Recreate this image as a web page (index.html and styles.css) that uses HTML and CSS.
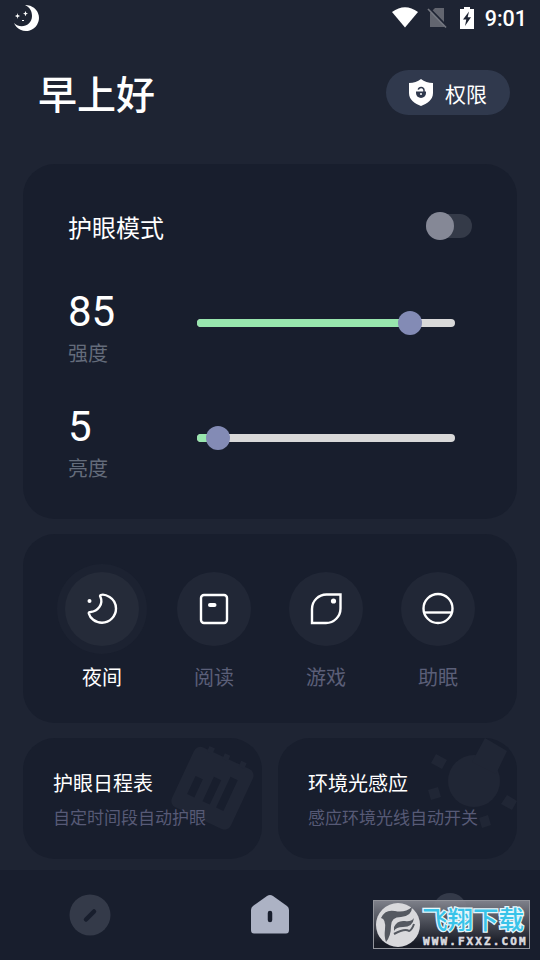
FILE: index.html
```html
<!DOCTYPE html>
<html lang="zh-CN">
<head>
<meta charset="utf-8">
<title>护眼模式</title>
<link rel="stylesheet" href="styles.css">
</head>
<body>
<div class="screen">
  <div class="status">
    <svg class="status-moon" width="28" height="28" viewBox="0 0 28 28" fill="#fff"><path d="M12 1A13 13 0 1 1 1 19C8 26 19 21 19 12C19 6 16 3 12 1Z"/><path d="M4 9l1 2 2 1-2 1v2l-1-2-2-1 2-1zM12.500 7l.8 2 1.700.5-1.700.7-.8 2-.8-2-1.700-.7 1.700-.5zM9 16h2v1H9z"/></svg>
    <div class="status-right">
      <svg width="26" height="21" viewBox="0 0 26 21"><path d="M0 5Q13-4.500 26 5L13 20.500Z" fill="#fff"/></svg>
      <svg width="20" height="22" viewBox="0 0 20 22"><path d="M8 1H17V20H3V6Z" fill="#62656f"/><path d="M2 1L20 19.500" stroke="#1e2433" stroke-width="2"/><path d="M1 2L19 20.500" stroke="#747780" stroke-width="1.700"/></svg>
      <svg width="14" height="22" viewBox="0 0 14 22"><path d="M4 0H10V2H14V22H0V2H4Z" fill="#fff"/><path d="M9 4.500L3 12.500H6.300L5 19L11 10.200H7.700Z" fill="#1e2433"/></svg>
      <span class="clock">9:01</span>
    </div>
  </div>

  <header class="header">
    <h1>早上好</h1>
    <div class="permission">
      <svg width="24" height="27" viewBox="0 0 24 27"><path d="M12 0Q17 4 24 4V14C24 21 18 24.500 12 27C6 24.500 0 21 0 14V4Q7 4 12 0Z" fill="#fff"/><path d="M7 12.500H17V14A5 5 0 0 1 7 14Z" fill="#30394d"/><path d="M9.300 10.700A2.900 2.900 0 0 1 15 11V13" fill="none" stroke="#30394d" stroke-width="1.500"/><circle cx="12" cy="15" r="1" fill="#fff"/></svg>
      <span>权限</span>
    </div>
  </header>

  <section class="card controls">
    <div class="mode-row">
      <span>护眼模式</span>
      <div class="switch"><div class="switch-knob"></div></div>
    </div>
    <div class="slider-row">
      <div class="reading"><div class="value">85</div><div class="label">强度</div></div>
      <div class="track"><div class="fill" style="width:213px"></div><div class="thumb"></div></div>
    </div>
    <div class="slider-row">
      <div class="reading"><div class="value">5</div><div class="label">亮度</div></div>
      <div class="track"><div class="fill" style="width:21px"></div><div class="thumb"></div></div>
    </div>
  </section>

  <section class="card presets">
    <div class="preset active">
      <div class="disc"><svg width="36" height="36" viewBox="0 0 36 36"><path d="M16.700 4C20 2.700 32 6 32 17.500A14.200 14.200 0 0 1 18 31.700C11 31.700 6 27 4.800 22.500Q4.500 21 6.500 21C14 20.500 19.500 13 16.500 6Q15.500 4.500 16.700 4Z"/><circle class="dot" cx="5.500" cy="10" r="2"/></svg></div>
      <span>夜间</span>
    </div>
    <div class="preset">
      <div class="disc"><svg width="36" height="36" viewBox="0 0 36 36"><rect x="5" y="4" width="26" height="28" rx="3"/><path d="M14 14H18.500" stroke-width="4" stroke-linecap="round"/></svg></div>
      <span>阅读</span>
    </div>
    <div class="preset">
      <div class="disc"><svg width="36" height="36" viewBox="0 0 36 36"><path d="M4 32V18A14.500 14.500 0 0 1 18.500 3.500H32.500V17.500A14.500 14.500 0 0 1 18 32Z"/><circle class="dot" cx="25.500" cy="10" r="2.600"/></svg></div>
      <span>游戏</span>
    </div>
    <div class="preset">
      <div class="disc"><svg width="36" height="36" viewBox="0 0 36 36"><circle cx="18" cy="17.500" r="14.500"/><path d="M4 21.500H32"/></svg></div>
      <span>助眠</span>
    </div>
  </section>

  <div class="features">
    <section class="card feature">
      <svg class="art" width="239" height="121" viewBox="0 0 239 121"><g transform="translate(189 50) rotate(25)"><rect x="-32" y="-33" width="65" height="66" rx="7" fill="#202635"/><path d="M-20-37h6v6h-6zM-3-37h6v6h-6zM15-37h6v6h-6z" fill="#202635"/><path d="M-20-4h8v20h-8zM-3-11h8v27h-8zM12-18h8v34h-8z" fill="#181e2d"/></g></svg>
      <h2>护眼日程表</h2>
      <p>自定时间段自动护眼</p>
    </section>
    <section class="card feature">
      <svg class="art" width="239" height="121" viewBox="0 0 239 121" fill="#202635"><circle cx="196" cy="43" r="26"/><path d="M207 0L229 13L218 36L194 24ZM158 16L169 22L164 31L153 25ZM150 52L160 49L163 59L153 62ZM229 57L239 63L234 72L223 66ZM201 80L210 77L213 87L204 90Z"/></svg>
      <h2>环境光感应</h2>
      <p>感应环境光线自动开关</p>
    </section>
  </div>

  <nav class="nav">
    <svg width="42" height="42" viewBox="0 0 42 42"><circle cx="21" cy="21" r="20.500" fill="#343a49"/><path d="M17 25.500L25 17.500" stroke="#181e2d" stroke-width="4.500" stroke-linecap="round"/></svg>
    <svg width="42" height="42" viewBox="0 0 42 42"><path d="M18 2Q21 0 24 2L38 12Q40 13.500 40 16V36Q40 39.500 37 39.500H5Q2 39.500 2 36V16Q2 13.500 4 12Z" fill="#acb2c4"/><path d="M21 19V26" stroke="#181e2d" stroke-width="4.500" stroke-linecap="round"/></svg>
    <svg width="42" height="42" viewBox="0 0 42 42"><circle cx="21" cy="16" r="17" fill="#343a49"/></svg>
  </nav>

  <div class="watermark">
    <svg width="47" height="47" viewBox="0 0 47 47"><circle cx="24" cy="24" r="22" fill="#d9d9dc"/><path d="M7 17Q11 8 21 10Q31 12 38 6Q38 15 27 16Q17 16 17 25Q17 35 12 41Q10 36 11 28Q12 18 7 17ZM20 26Q23 19 31 20Q37 21 40 17Q39 26 29 26Q22 26 20 30Z" fill="#555961"/><path d="M20 33Q31 27 35 30Q38 29 40 23" fill="none" stroke="#555961" stroke-width="2"/></svg>
    <div class="watermark-text"><div class="watermark-name">飞翔下载</div><div class="watermark-url">WWW.FXXZ.COM</div></div>
  </div>
</div>
</body>
</html>
```

FILE: styles.css
```css
* { box-sizing: border-box; }
body { margin: 0; background: #1e2433; color: #fff; font-family: Roboto, "Noto Sans CJK SC", sans-serif; white-space: nowrap; }
h1, h2, p { margin: 0; }
svg { display: block; flex: none; overflow: visible; }
.screen { position: relative; width: 540px; height: 960px; overflow: hidden; display: flex; flex-direction: column; }
.status { height: 36px; display: flex; justify-content: space-between; align-items: flex-start; padding: 4px 13px 0 13px; }
.status-right { display: flex; align-items: center; padding-top: 1px; }
.status-right svg:nth-child(1) { margin-right: 9px; }
.status-right svg:nth-child(2) { margin-right: 13px; }
.clock { margin-left: 11px; font-size: 21.500px; font-weight: 500; line-height: 22px; padding-top: 3px; }
.header { height: 128px; display: flex; justify-content: space-between; align-items: flex-start; padding: 34px 30px 0 38px; }
h1 { font-size: 39px; line-height: 45px; font-weight: 500; padding-top: 4px; }
.permission { width: 124px; height: 45px; border-radius: 23px; background: #30394d; display: flex; align-items: center; padding-left: 23px; gap: 12px; font-size: 21px; }
.card { background: #181e2d; border-radius: 32px; }
.controls { margin: 0 23px; height: 355px; padding: 40px 45px 0; }
.mode-row { height: 45px; display: flex; align-items: center; justify-content: space-between; font-size: 24px; line-height: 45px; }
.mode-row span { padding-top: 5px; }
.switch { width: 46px; height: 24px; border-radius: 12px; background: #343a48; display: flex; align-items: center; margin-top: -1px; }
.switch-knob { width: 28px; height: 28px; border-radius: 50%; background: #858896; flex: none; }
.slider-row { height: 115px; display: flex; }
.mode-row + .slider-row { margin-top: 31px; }
.reading { width: 129px; padding-top: 4px; }
.value { font-size: 42px; line-height: 56px; }
.label { font-size: 20px; line-height: 28px; color: #646c7b; }
.track { margin-top: 39px; width: 258px; height: 8px; border-radius: 4px; background: #d9d9d9; display: flex; align-items: center; }
.fill { height: 8px; border-radius: 4px 0 0 4px; background: #98e6ae; flex: none; }
.thumb { width: 24px; height: 24px; border-radius: 50%; background: #838bb5; margin-left: -12px; flex: none; }
.presets { margin: 15px 23px 0; height: 189px; padding: 38px 23px 0; display: grid; grid-template-columns: repeat(4, 112px); }
.preset { display: flex; flex-direction: column; align-items: center; color: #5b5f78; font-size: 20px; line-height: 30px; }
.disc { width: 74px; height: 74px; border-radius: 50%; background: #212736; display: flex; align-items: center; justify-content: center; margin-bottom: 17px; }
.disc svg { fill: none; stroke: #fff; stroke-width: 2.400; }
.disc .dot { fill: #fff; stroke: none; }
.active { color: #fff; }
.active .disc { background: #252b39; box-shadow: 0 0 0 8px #1c2231; }
.features { margin: 15px 23px 11px; display: grid; grid-template-columns: 239px 239px; gap: 16px; height: 121px; }
.feature { position: relative; overflow: hidden; padding: 31px 30px 0; }
.art { position: absolute; left: 0; top: 0; }
.feature h2 { position: relative; font-size: 20px; line-height: 30px; font-weight: 400; }
.feature p { position: relative; margin-top: 7px; font-size: 17px; line-height: 25px; color: #575a76; }
.nav { height: 90px; background: #181e2d; display: flex; justify-content: space-between; padding: 24px 69px 0; }
.watermark { position: absolute; left: 373px; top: 900px; width: 157px; height: 49px; border: 1px solid #92949b; background: linear-gradient(rgba(136, 138, 147, .9), rgba(24, 27, 37, .94) 90%); display: flex; }
.watermark-text { flex: 1; display: flex; flex-direction: column; padding: 4px 0 0 1px; }
.watermark-name { font-size: 25.500px; line-height: 31px; font-weight: 500; color: #38c3e9; -webkit-text-stroke: 2.500px #e5f7fc; paint-order: stroke fill; }
.watermark-url { margin-left: 1px; font: 700 11px/11px "DejaVu Sans Mono", monospace; color: #dcdce0; letter-spacing: 2.100px; -webkit-text-stroke: .5px #dcdce0; }
```
